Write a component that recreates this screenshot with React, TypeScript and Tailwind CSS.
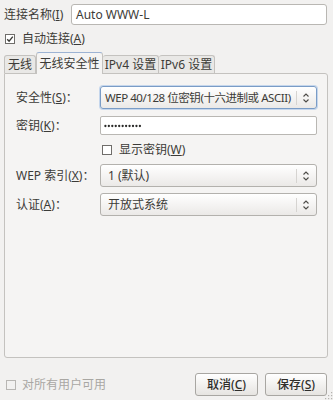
import React from 'react'

const font = { fontFamily: '"Noto Sans", "Noto Sans CJK SC", sans-serif' }

function Check({ checked, disabled }: { checked?: boolean; disabled?: boolean }) {
  return (
    <svg width="10" height="10" viewBox="0 0 10 10" className="shrink-0">
      <rect x="0.5" y="0.5" width="9" height="9" fill={disabled ? '#f2f1f0' : '#fff'} stroke={disabled ? '#b8b6b3' : '#6f6d6a'} />
      {checked && <path d="M2.2 5.2 L4.1 7.2 L7.8 2.6" fill="none" stroke="#3c3b37" strokeWidth="1.4" />}
    </svg>
  )
}

function Spin() {
  return (
    <div className="flex items-center h-full shrink-0">
      <div className="w-px h-[14px] bg-[#d6d4d1]" />
      <svg width="18" height="12" viewBox="0 0 18 12">
        <path d="M6.5 4.5 L9 2 L11.5 4.5" fill="none" stroke="#4c4b47" strokeWidth="1.1" />
        <path d="M6.5 7.5 L9 10 L11.5 7.5" fill="none" stroke="#4c4b47" strokeWidth="1.1" />
      </svg>
    </div>
  )
}

function Combo({ text, focused, tight }: { text: string; focused?: boolean; tight?: boolean }) {
  return (
    <div
      className={`flex items-center h-[23px] w-[217px] rounded-[3px] border bg-gradient-to-b from-[#ffffff] to-[#ebe9e7] pl-[4px] pr-[1px] ${
        focused ? 'border-[#7a9cc6] shadow-[0_0_0_1px_#c5d6ec]' : 'border-[#b3b1ad]'
      }`}
    >
      <span
        className={`flex-1 min-w-0 text-[#3c3b37] whitespace-nowrap ${
          tight ? 'text-[11.5px] tracking-[-0.45px]' : 'text-[12px] pl-[3px]'
        }`}
      >
        {text}
      </span>
      <Spin />
    </div>
  )
}

function Row({ label, children }: { label: React.ReactNode; children: React.ReactNode }) {
  return (
    <div className="flex items-center">
      <span className="w-[84px] text-[12px] text-[#3c3b37] whitespace-nowrap">{label}</span>
      {children}
    </div>
  )
}

function Dots() {
  return (
    <svg width="40" height="6" viewBox="0 0 40 6">
      {Array.from({ length: 11 }).map((_, i) => (
        <circle key={i} cx={1.4 + i * 3.45} cy="3" r="1.15" fill="#2a2a28" />
      ))}
    </svg>
  )
}

export default function App() {
  return (
    <div className="w-[333px] h-[400px] bg-[#f2f1f0] flex flex-col relative overflow-hidden" style={font}>
      {/* connection name */}
      <div className="flex items-center pt-[4px] pl-[4px] pr-[6px]">
        <span className="w-[67px] text-[12px] text-[#3c3b37]">
          连接名称(<u>I</u>)
        </span>
        <div className="flex-1 h-[21px] bg-white border border-[#b9b7b3] rounded-[3px] flex items-center px-[4px] text-[12px] text-[#3c3b37]">
          Auto WWW-L
        </div>
      </div>

      {/* autoconnect */}
      <div className="flex items-center gap-[7px] pl-[5px] mt-[7px] h-[14px]">
        <Check checked />
        <span className="text-[12px] text-[#3c3b37]">
          自动连接(<u>A</u>)
        </span>
      </div>

      {/* tabs */}
      <div className="flex items-end pl-[4px] mt-[5px] h-[22px]">
        <div className="h-[18px] w-[32px] border border-b-0 border-[#c4c2bf] bg-[#e9e8e6] rounded-t-[3px] text-[12px] text-[#3c3b37] flex items-center justify-center">
          无线
        </div>
        <div className="h-[22px] w-[67px] border border-b-0 border-[#c4c2bf] border-t-[#9db3d3] bg-[#f5f4f3] rounded-t-[3px] text-[12px] text-[#3c3b37] flex items-center justify-center relative -mb-px z-10">
          无线安全性
        </div>
        <div className="h-[18px] w-[56px] border border-b-0 border-l-0 border-[#c4c2bf] bg-[#e9e8e6] rounded-t-[3px] text-[12px] text-[#3c3b37] flex items-center justify-center whitespace-nowrap">
          IPv4 设置
        </div>
        <div className="h-[18px] w-[56px] border border-b-0 border-l-0 border-[#c4c2bf] bg-[#e9e8e6] rounded-t-[3px] text-[12px] text-[#3c3b37] flex items-center justify-center whitespace-nowrap">
          IPv6 设置
        </div>
      </div>

      {/* panel */}
      <div className="ml-[4px] mr-[5px] h-[285px] border border-[#c4c2bf] rounded-b-[3px] rounded-tr-[3px] bg-[#f5f4f3] pt-[12px] pl-[11px] flex flex-col">
        <Row label={<>安全性(<u>S</u>)：</>}>
          <Combo text="WEP 40/128 位密钥(十六进制或 ASCII)" focused tight />
        </Row>
        <div className="mt-[7px]">
          <Row label={<>密钥(<u>K</u>)：</>}>
            <div className="w-[217px] h-[19px] bg-white border border-[#b9b7b3] rounded-[2px] flex items-center pl-[3px]">
              <Dots />
            </div>
          </Row>
        </div>
        <div className="flex items-center gap-[7px] ml-[86px] mt-[8px] h-[14px]">
          <Check />
          <span className="text-[12px] text-[#3c3b37]">
            显示密钥(<u>W</u>)
          </span>
        </div>
        <div className="mt-[7px]">
          <Row label={<>WEP 索引(<u>X</u>)：</>}>
            <Combo text="1 (默认)" />
          </Row>
        </div>
        <div className="mt-[6px]">
          <Row label={<>认证(<u>A</u>)：</>}>
            <Combo text="开放式系统" />
          </Row>
        </div>
      </div>

      {/* bottom */}
      <div className="flex items-center pl-[6px] pr-[6px] mt-[15px]">
        <Check disabled />
        <span className="ml-[6px] text-[12px] text-[#a9a7a3]">对所有用户可用</span>
        <div className="flex-1" />
        <button className="w-[63px] h-[23px] rounded-[3px] border border-[#a8a6a2] bg-gradient-to-b from-[#ffffff] to-[#e6e4e1] text-[12px] text-[#2f2e2b] font-medium">
          取消(<u>C</u>)
        </button>
        <button className="ml-[7px] w-[62px] h-[23px] rounded-[3px] border border-[#a8a6a2] bg-gradient-to-b from-[#ffffff] to-[#e6e4e1] text-[12px] text-[#2f2e2b] font-medium">
          保存(<u>S</u>)
        </button>
      </div>

      {/* resize grip */}
      <svg width="9" height="9" viewBox="0 0 9 9" className="absolute right-0 bottom-0">
        {[[7, 1], [4, 4], [7, 4], [1, 7], [4, 7], [7, 7]].map(([x, y], i) => (
          <rect key={i} x={x} y={y} width="1.2" height="1.2" fill="#b5b3af" />
        ))}
      </svg>
    </div>
  )
}
